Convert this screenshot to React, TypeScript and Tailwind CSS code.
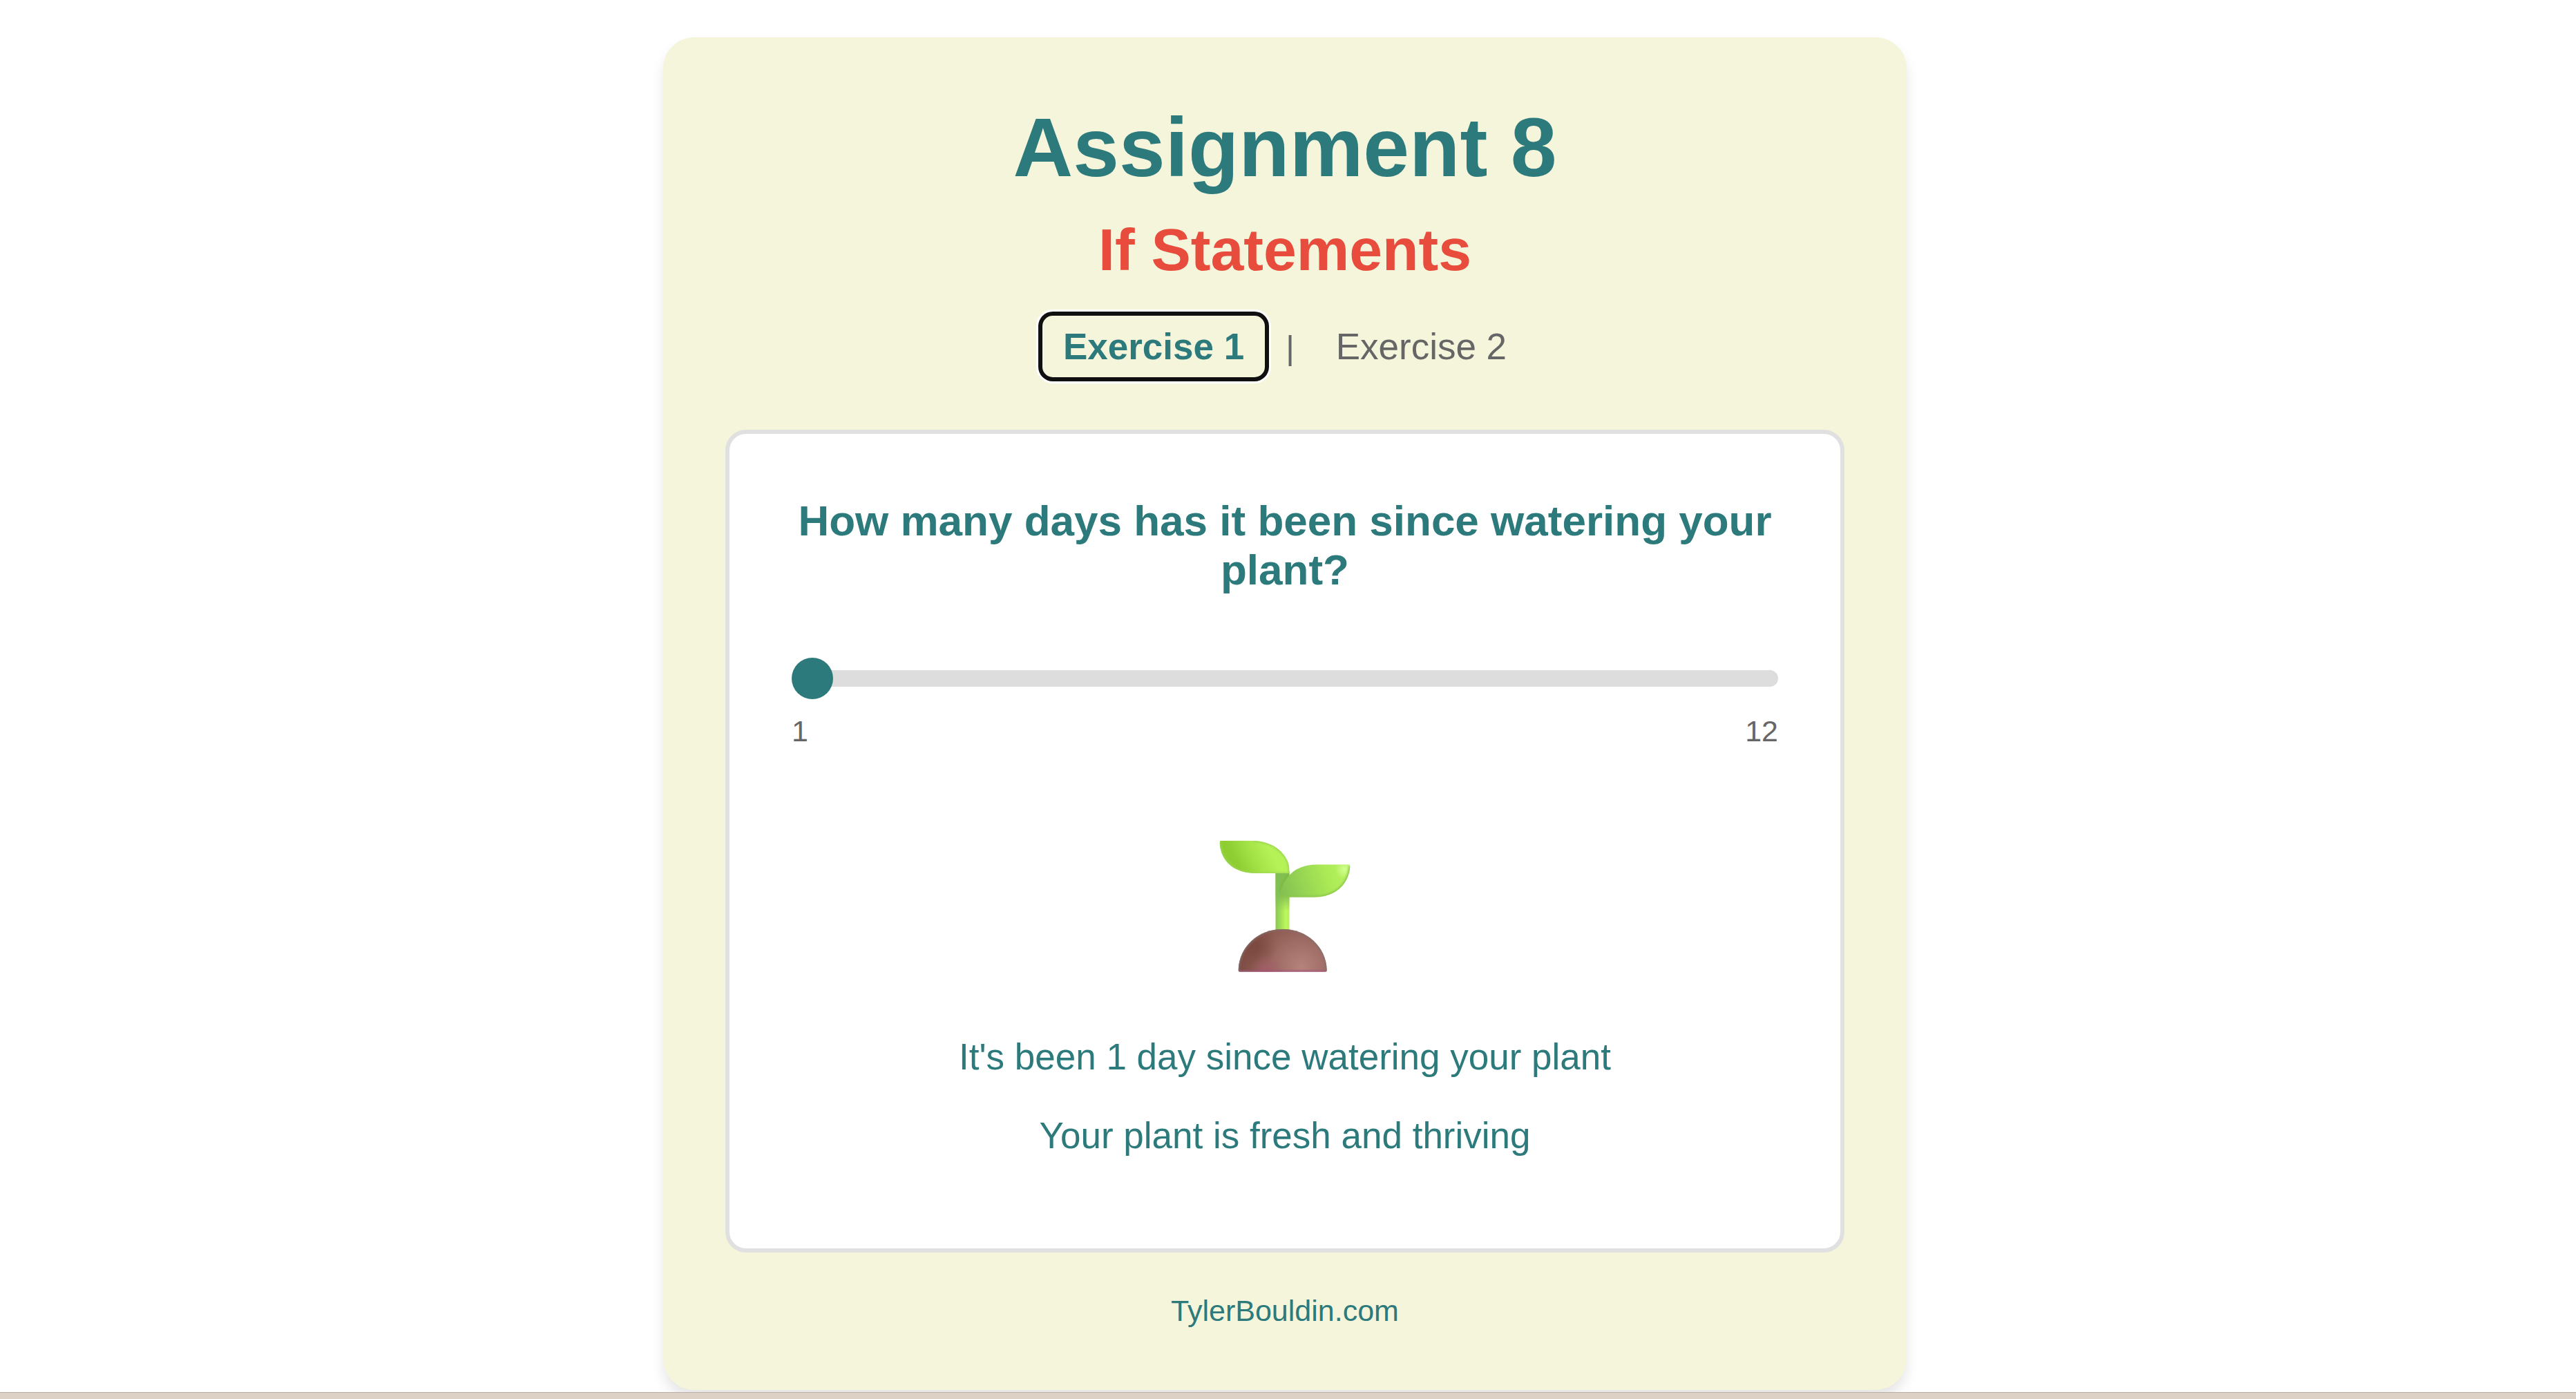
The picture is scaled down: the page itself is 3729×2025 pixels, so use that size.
import { useState } from "react";

const exercises = ["Exercise 1", "Exercise 2"];

function Seedling() {
  return (
    <svg viewBox="75 82 567 570" className="block h-[190px] w-[190px]" role="img" aria-label="Seedling">
      <defs>
        <linearGradient id="stem" x1="318" y1="0" x2="378" y2="0" gradientUnits="userSpaceOnUse">
          <stop offset="0" stopColor="#8cc653" />
          <stop offset="0.35" stopColor="#a0dd55" />
          <stop offset="0.75" stopColor="#bdf65f" />
          <stop offset="1" stopColor="#b5ee5c" />
        </linearGradient>
        <linearGradient id="stemShade" x1="0" y1="222" x2="0" y2="385" gradientUnits="userSpaceOnUse">
          <stop offset="0" stopColor="#82bf52" />
          <stop offset="0.6" stopColor="#82bf52" stopOpacity="0.9" />
          <stop offset="1" stopColor="#82bf52" stopOpacity="0" />
        </linearGradient>
        <linearGradient id="leafLeft" x1="150" y1="180" x2="290" y2="110" gradientUnits="userSpaceOnUse">
          <stop offset="0" stopColor="#8fce33" />
          <stop offset="0.45" stopColor="#a2e144" />
          <stop offset="1" stopColor="#b5f258" />
        </linearGradient>
        <linearGradient id="leafRight" x1="345" y1="300" x2="600" y2="215" gradientUnits="userSpaceOnUse">
          <stop offset="0" stopColor="#84c153" />
          <stop offset="0.45" stopColor="#9bd953" />
          <stop offset="0.8" stopColor="#adeb56" />
          <stop offset="1" stopColor="#b2ef5c" />
        </linearGradient>
        <radialGradient id="leafTip" cx="618" cy="206" r="42" gradientUnits="userSpaceOnUse">
          <stop offset="0" stopColor="#d2ff90" />
          <stop offset="1" stopColor="#d2ff90" stopOpacity="0" />
        </radialGradient>
        <radialGradient id="soil" cx="430" cy="630" r="270" gradientUnits="userSpaceOnUse">
          <stop offset="0" stopColor="#b5827c" />
          <stop offset="0.4" stopColor="#a06d66" />
          <stop offset="0.75" stopColor="#8b584f" />
          <stop offset="1" stopColor="#7d4b43" />
        </radialGradient>
        <radialGradient id="soilDark" cx="235" cy="545" r="90" gradientUnits="userSpaceOnUse">
          <stop offset="0" stopColor="#734039" stopOpacity="0.6" />
          <stop offset="1" stopColor="#734039" stopOpacity="0" />
        </radialGradient>
        <radialGradient id="soilPink" cx="280" cy="650" r="75" gradientUnits="userSpaceOnUse">
          <stop offset="0" stopColor="#a45c6a" stopOpacity="0.8" />
          <stop offset="1" stopColor="#a45c6a" stopOpacity="0" />
        </radialGradient>
        <linearGradient id="soilBase" x1="0" y1="640" x2="0" y2="651" gradientUnits="userSpaceOnUse">
          <stop offset="0" stopColor="#a0567a" stopOpacity="0" />
          <stop offset="1" stopColor="#a0567a" />
        </linearGradient>
        <filter id="soft" x="-20%" y="-20%" width="140%" height="140%">
          <feGaussianBlur stdDeviation="5" />
        </filter>
        <clipPath id="leftClip">
          <path d="M80 82H222C305 82 378 140 378 210V223H232C140 223 81 175 75 90Q75 82 80 82Z" />
        </clipPath>
        <clipPath id="rightClip">
          <path d="M636 185H502C440 185 400 206 376 234C352 262 338 292 338 321Q338 327 345 327H484C575 327 635 275 642 193Q642 185 636 185Z" />
        </clipPath>
        <clipPath id="soilClip">
          <path d="M156 643C160 540 245 465 349 465C452 465 537 540 541 643Q541 651 533 651H164Q156 651 156 643Z" />
        </clipPath>
      </defs>
      <path d="M318 215H378V480H318Z" fill="url(#stem)" />
      <path d="M318 215H378V385H318Z" fill="url(#stemShade)" />
      <path d="M374 228C352 255 341 277 339 305" fill="none" stroke="#77b93d" strokeWidth="8" filter="url(#soft)" />
      <g clipPath="url(#leftClip)">
        <path d="M70 78H382V227H70Z" fill="url(#leafLeft)" />
        <path d="M222 82C305 82 378 140 378 210V223" fill="none" stroke="#9bd44f" strokeWidth="10" filter="url(#soft)" />
        <path d="M75 90C81 175 140 223 232 223H378" fill="none" stroke="#9ed65a" strokeWidth="8" filter="url(#soft)" />
      </g>
      <g clipPath="url(#rightClip)">
        <path d="M334 181H646V331H334Z" fill="url(#leafRight)" />
        <path d="M334 181H646V331H334Z" fill="url(#leafTip)" />
        <path d="M642 193C635 275 575 327 484 327H345" fill="none" stroke="#8cc84c" strokeWidth="12" filter="url(#soft)" />
      </g>
      <g clipPath="url(#soilClip)">
        <path d="M150 460H546V655H150Z" fill="url(#soil)" />
        <path d="M150 460H546V655H150Z" fill="url(#soilDark)" />
        <path d="M150 460H546V655H150Z" fill="url(#soilPink)" />
        <path d="M150 636H546V652H150Z" fill="url(#soilBase)" />
        <path
          d="M156 651C156 540 245 465 349 465C452 465 541 540 541 651"
          fill="none"
          stroke="#84706a"
          strokeWidth="10"
          filter="url(#soft)"
        />
      </g>
    </svg>
  );
}

export default function App() {
  const [active, setActive] = useState(0);
  const [days, setDays] = useState(1);

  return (
    <div className="flex min-h-screen flex-col bg-white font-['Liberation_Sans',Arial,sans-serif]">
      <div className="flex grow justify-center overflow-hidden pt-[54px] pr-[9px] pb-[3px]">
        <main className="flex w-full max-w-[1800px] flex-col items-center self-start rounded-[45px] bg-[#f5f5dc] p-[90px] text-center shadow-[0_12px_18px_rgba(0,0,0,0.1)]">
          <h1 className="text-[120px] leading-[138px] font-bold text-[#2c7a7b]">Assignment 8</h1>
          <h2 className="mt-[30px] text-[86px] leading-[99px] font-bold text-[#e74c3c]">If Statements</h2>

          <nav className="mt-[46px] flex items-baseline gap-[30px] text-[48px] leading-[59px] text-[#666]">
            {exercises.map((name, i) => (
              <div key={name} className="flex items-baseline gap-[30px]">
                {i > 0 && <span>|</span>}
                <a
                  href={`#exercise-${i + 1}`}
                  onClick={() => setActive(i)}
                  className={
                    i === active
                      ? "rounded-[15px] px-[30px] py-[15px] text-[53px] font-bold text-[#2c7a7b] shadow-[0_0_0_6px_#101010,0_0_0_9px_#fff] outline-none"
                      : "rounded-[15px] px-[30px] py-[15px] text-[53px] text-[#666]"
                  }
                >
                  {name}
                </a>
              </div>
            ))}
          </nav>

          <section className="mt-[76px] flex w-full flex-col items-center rounded-[30px] border-[6px] border-[#e0e0e0] bg-white p-[90px]">
            <label htmlFor="days" className="text-[62px] leading-[71px] font-bold text-[#2c7a7b]">
              How many days has it been since watering your plant?
            </label>
            <input
              id="days"
              type="range"
              min={1}
              max={12}
              value={days}
              onChange={(e) => setDays(Number(e.target.value))}
              className="mt-[92px] block h-[60px] w-full cursor-pointer appearance-none bg-transparent outline-none [&::-webkit-slider-runnable-track]:h-[24px] [&::-webkit-slider-runnable-track]:rounded-full [&::-webkit-slider-runnable-track]:bg-[#ddd] [&::-webkit-slider-thumb]:mt-[-18px] [&::-webkit-slider-thumb]:h-[60px] [&::-webkit-slider-thumb]:w-[60px] [&::-webkit-slider-thumb]:appearance-none [&::-webkit-slider-thumb]:rounded-full [&::-webkit-slider-thumb]:bg-[#2c7a7b]"
            />
            <div className="mt-[22px] flex w-full justify-between text-[43px] leading-[49px] text-[#666]">
              <span>1</span>
              <span>12</span>
            </div>
            <div className="mt-[134px]">
              <Seedling />
            </div>
            <div className="mt-[92px] mb-[43px] flex flex-col gap-[53px] text-[53px] leading-[61px] text-[#2c7a7b]">
              <p>
                {`It's been ${days} ${days === 1 ? "day" : "days"} since watering your plant`}
              </p>
              <p>Your plant is fresh and thriving</p>
            </div>
          </section>

          <a href="#home" className="mt-[60px] text-[43px] leading-[49px] text-[#2c7a7b]">
            TylerBouldin.com
          </a>
        </main>
      </div>
      <div className="h-[10px] border-t border-[#b9afa8] bg-[#ddd0c5]" />
    </div>
  );
}
